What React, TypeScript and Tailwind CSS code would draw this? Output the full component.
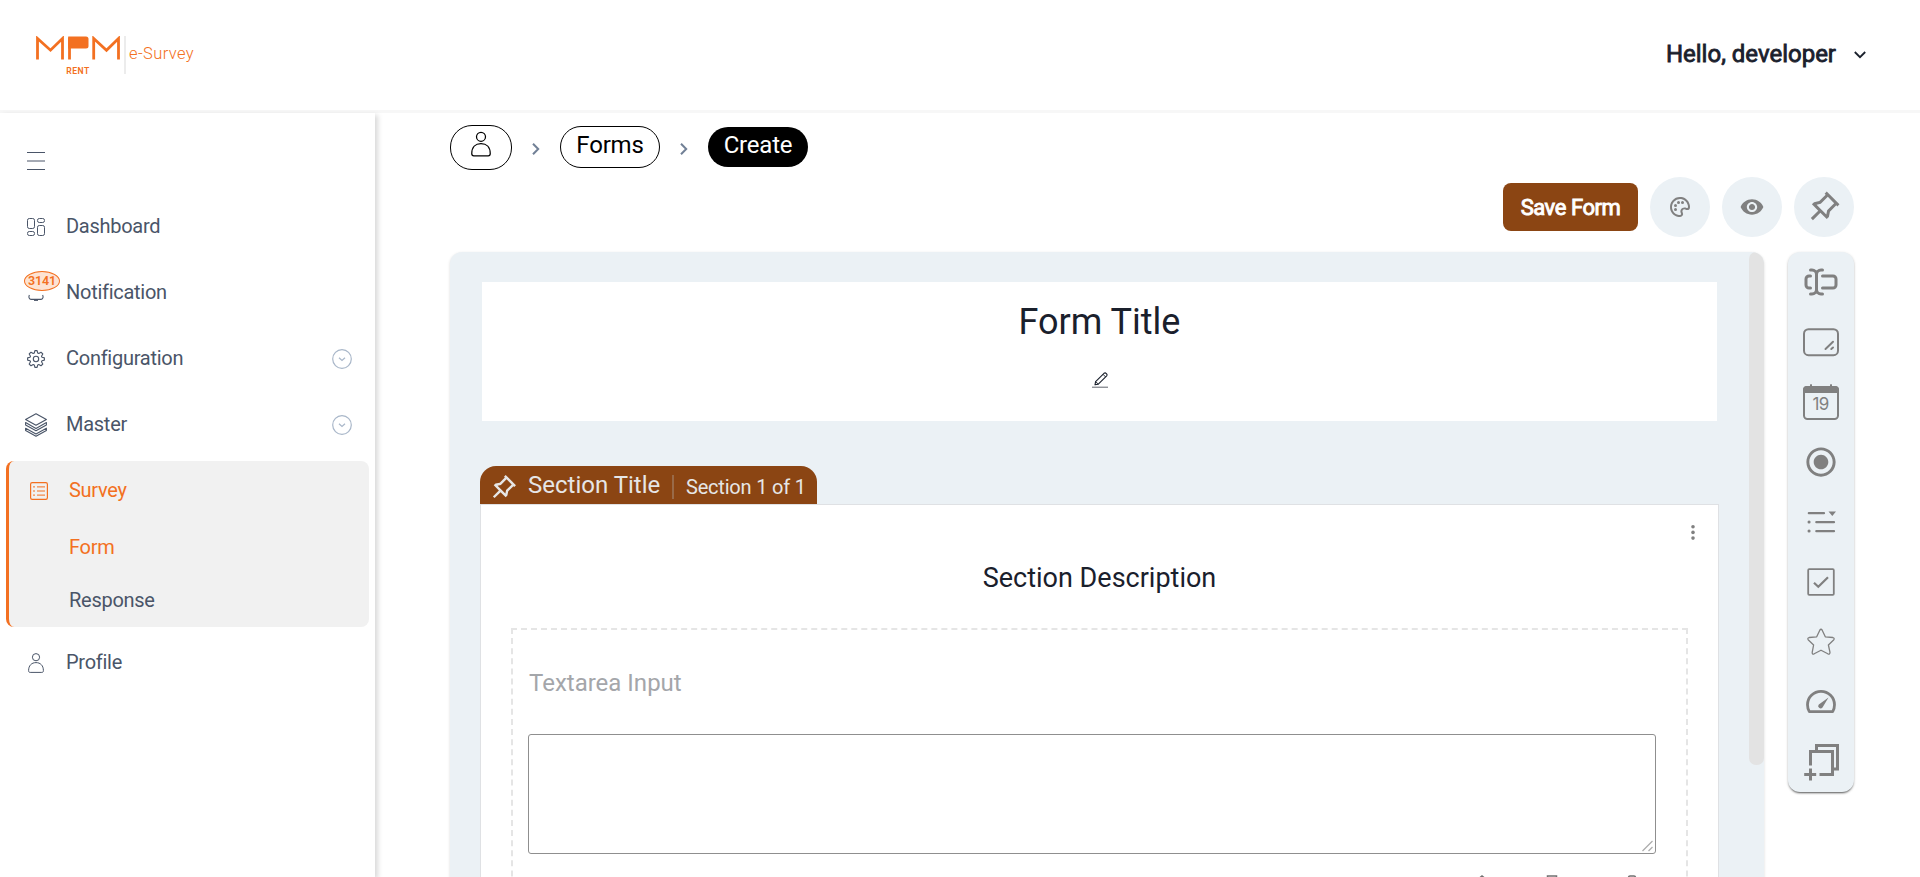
import React from "react";
import { RiPushpinLine } from "react-icons/ri";
import { IoMdEye, IoMdRadioButtonOn } from "react-icons/io";
import { LuTextCursorInput } from "react-icons/lu";
import { BiPalette } from "react-icons/bi";

type SvgProps = { className?: string };

function Logo() {
  return (
    <svg className="h-[40px] w-[86px]" viewBox="0 0 86 40" fill="none">
      <path d="M1.5 23.5V2.5L14.5 14.2L26.5 2.5V23.5" stroke="#f37021" strokeWidth="2.8" />
      <path d="M33.5 23.5V1.5" stroke="#f37021" strokeWidth="2.8" />
      <path d="M32.2 .5H50Q52.5 .5 52.5 3V10Q52.5 12.5 50 12.5H32.2Z" fill="#f37021" />
      <path d="M57.7 23.5V2.5L70.5 14.2L82.5 2.5V23.5" stroke="#f37021" strokeWidth="2.8" />
      <text x="30.3" y="38" textLength="23" fontFamily="Roboto, sans-serif" fontSize="8.6" fontWeight="600" fill="#f37021">RENT</text>
    </svg>
  );
}

function MenuIcon() {
  return (
    <svg className="size-[18px]" viewBox="0 0 18 18" stroke="#4a5568">
      <path d="M0 .5H18M0 17.5H18" />
      <path d="M0 9H18" strokeWidth="1" />
    </svg>
  );
}

function DashboardIcon() {
  return (
    <svg className="size-[18px]" viewBox="0 0 18 18" fill="none" stroke="#4a5568">
      <rect x=".5" y=".5" width="7" height="10" rx="1.8" />
      <rect x="10.5" y=".5" width="7" height="4" rx="1.8" />
      <rect x=".5" y="13.5" width="7" height="4" rx="1.8" />
      <rect x="10.5" y="7.5" width="7" height="10" rx="1.8" />
    </svg>
  );
}

function BellIcon() {
  return (
    <svg className="size-[18px]" viewBox="0 0 18 18" fill="none" stroke="#4a5568">
      <path d="M2.4 11C1.6 12.5 1.6 15 4 15.4H14C16.4 15 16.4 12.5 15.6 11" strokeWidth="1.1" />
      <path d="M7 16.2H11" strokeWidth="1.4" />
    </svg>
  );
}

function GearIcon() {
  return (
    <svg className="size-[18px]" viewBox="0 0 18 18" fill="none" stroke="#4a5568" strokeWidth="1.1" strokeLinejoin="round">
      <path d="M7.9 .6H10.1L10.7 3L11.8 3.5L14 2.2L15.8 4L14.5 6.2L15 7.3L17.4 7.9V10.1L15 10.7L14.5 11.8L15.8 14L14 15.8L11.8 14.5L10.7 15L10.1 17.4H7.9L7.3 15L6.2 14.5L4 15.8L2.2 14L3.5 11.8L3 10.7L.6 10.1V7.9L3 7.3L3.5 6.2L2.2 4L4 2.2L6.2 3.5L7.3 3Z" />
      <circle cx="9" cy="9" r="2.7" />
    </svg>
  );
}

function LayersIcon() {
  return (
    <svg className="h-[24px] w-[22px]" viewBox="0 0 22 24" fill="none" stroke="#4a5568" strokeWidth="1.1" strokeLinejoin="round">
      <path d="M11 .7L21.4 6.4L11 12.3L.6 6.4Z" />
      <path d="M.6 9.6L11 15.4L21.4 9.6V12L11 17.8L.6 12Z" />
      <path d="M.6 15.2L11 21L21.4 15.2V17.5L11 23.3L.6 17.5Z" />
    </svg>
  );
}

function SurveyIcon() {
  return (
    <svg className="size-[18px]" viewBox="0 0 18 18" fill="none" stroke="#f37021">
      <rect x=".6" y=".6" width="16.8" height="16.8" rx="1.6" strokeWidth="1.2" />
      <path d="M3 4.9H5M7 4.9H15M3 9H5M7 9H15M3 13.1H5M7 13.1H15" strokeWidth="1" />
    </svg>
  );
}

function PersonIcon({ className }: SvgProps) {
  return (
    <svg className={className} viewBox="0 0 16 20" fill="none" stroke="currentColor">
      <circle cx="8" cy="4.2" r="3.6" />
      <path d="M.6 17.6C.6 12.5 3.6 9.6 8 9.6S15.4 12.5 15.4 17.6C15.4 18.8 15 19.4 13.8 19.4H2.2C1 19.4 .6 18.8 .6 17.6Z" />
    </svg>
  );
}

function CircleDown() {
  return (
    <svg className="mt-px size-[20px]" viewBox="0 0 20 20" fill="none" stroke="#a9b7c9" strokeWidth="1.2">
      <circle cx="10" cy="10" r="9.3" />
      <path d="M7 8.7L10 11.5L13 8.7" />
    </svg>
  );
}

function Chevron() {
  return (
    <svg className="h-[12px] w-[8px]" viewBox="0 0 8 12" fill="none" stroke="#718096" strokeWidth="2">
      <path d="M1 .8L6.2 6L1 11.2" />
    </svg>
  );
}

function TextareaIcon() {
  return (
    <svg className="size-[36px]" viewBox="0 0 36 36" fill="none" stroke="#808080">
      <rect x="1" y="5.2" width="34" height="26" rx="4.5" strokeWidth="2" />
      <path d="M22.5 25L30 17.8M28.3 25L30 23.5" strokeWidth="2" strokeLinecap="round" />
    </svg>
  );
}

function CalendarIcon() {
  return (
    <svg className="size-[36px]" viewBox="0 0 36 36" fill="none">
      <rect x="1" y="3" width="34" height="32" rx="3.5" stroke="#808080" strokeWidth="2" />
      <path d="M0 9V5.5Q0 2 3.5 2H7V.8Q8 -.6 9 .8V2H27V.8Q28 -.6 29 .8V2H32.5Q36 2 36 5.5V9Z" fill="#808080" />
      <text x="17.6" y="26" textAnchor="middle" fontFamily="Inter, sans-serif" fontSize="17" letterSpacing="-.6" fill="#808080">19</text>
    </svg>
  );
}

function DropdownIcon() {
  return (
    <svg className="size-[36px]" viewBox="0 0 36 36" fill="none" stroke="#808080" strokeWidth="2.2" strokeLinecap="round">
      <path d="M5.8 9.2H21M13.3 18.2H31M13.3 27.2H31" />
      <path d="M6 18H6.1M6 27H6.1" strokeWidth="3" />
      <path d="M25.5 7.5H33L29.3 12Z" fill="#808080" stroke="none" />
    </svg>
  );
}

function CheckboxIcon() {
  return (
    <svg className="size-[36px]" viewBox="0 0 36 36" fill="none" stroke="#808080">
      <rect x="5.2" y="5.2" width="25.6" height="25.6" rx="1" strokeWidth="1.8" />
      <path d="M11 18.7L15.3 22.8L25 13.2" strokeWidth="2.2" />
    </svg>
  );
}

function StarIcon() {
  return (
    <svg className="size-[36px]" viewBox="0 0 36 36" fill="none" stroke="#808080" strokeWidth="1.3" strokeLinejoin="round">
      <path d="M16.8 6.2Q18 4.3 19.2 6.2L22.3 12.8L29.8 13.5Q32 14.2 30.6 16L25.4 21L27 28.3Q27 30.7 24.8 29.8L18 26.2L11.2 29.8Q9 30.7 9.2 28.3L10.6 21L5.4 16Q4 14.2 6.2 13.5L13.7 12.8Z" />
    </svg>
  );
}

function GaugeIcon() {
  return (
    <svg className="size-[36px]" viewBox="0 0 36 36" fill="none">
      <path d="M6.3 27.6Q4.5 24.6 4.5 20.8A13.5 13.5 0 0 1 31.5 20.8Q31.5 24.6 29.7 27.6Z" stroke="#808080" strokeWidth="2.8" strokeLinejoin="round" />
      <path d="M25.5 13.4L15.8 20.4A2.3 2.3 0 1 0 19.5 23.6Z" fill="#808080" />
    </svg>
  );
}

function AddSectionIcon() {
  return (
    <svg className="size-[36px] overflow-visible" viewBox="0 0 36 36" fill="none" stroke="#808080" strokeWidth="3">
      <path d="M7.5 21.5V7.5H29.5V30.5H16.5" />
      <path d="M13.5 6.5V1.5H34.5V25H31" />
      <path d="M7.5 24.5V36.5M1.2 30.5H13.2" />
    </svg>
  );
}

function EditIcon() {
  return (
    <svg className="size-[16px]" viewBox="0 0 16 16" fill="none" stroke="#1a202c">
      <path d="M3 12.8L3.6 9.6L12 1.3C13.6 .2 15.8 2.2 14.7 3.8L6.3 12.1Z" strokeWidth="1.1" strokeLinejoin="round" />
      <path d="M11 2.3L13.7 5M3.6 9.6L6.3 12.1" strokeWidth=".9" />
      <path d="M0 15.2H16" strokeWidth="1" strokeOpacity=".7" />
    </svg>
  );
}

type NavProps = { icon: React.ReactNode; label: string; expandable?: boolean };

function NavItem({ icon, label, expandable }: NavProps) {
  return (
    <div className="flex h-[66px] items-center pl-[20px] pr-[23px]">
      <div className="flex w-[32px] justify-center pt-[2px]">{icon}</div>
      <span className="ml-[14px] flex-1 text-[20px] leading-[30px] tracking-[-0.27px] text-[#4a5568]">{label}</span>
      {expandable && <CircleDown />}
    </div>
  );
}

function Sidebar() {
  return (
    <aside className="relative z-10 flex w-[375px] shrink-0 flex-col bg-white shadow-[3px_2px_5px_rgba(0,0,0,0.15)]">
      <div className="pl-[27px] pt-[39px]">
        <MenuIcon />
      </div>
      <nav className="mt-[23px] flex flex-col">
        <NavItem icon={<DashboardIcon />} label="Dashboard" />
        <NavItem
          icon={
            <div className="relative">
              <BellIcon />
              <span className="absolute left-[-3px] top-[-13px] z-10 flex h-[20px] w-[36px] items-center justify-center rounded-[50%] border border-[#f37021] bg-[#fde3d3] text-[12.5px] font-semibold tracking-[-0.1px] text-[#f37021]">
                3141
              </span>
            </div>
          }
          label="Notification"
        />
        <NavItem icon={<GearIcon />} label="Configuration" expandable />
        <NavItem icon={<LayersIcon />} label="Master" expandable />
      </nav>
      <div className="ml-[6px] mt-[4px] flex h-[166px] w-[363px] flex-col rounded-[8px] border-l-[3px] border-[#f37021] bg-[#f1f1f1] text-[20px] leading-[30px] tracking-[-0.27px]">
        <div className="mt-[14px] flex h-[30px] items-center pl-[21px] text-[#f37021]">
          <span className="pt-[2px]"><SurveyIcon /></span>
          <span className="ml-[21px]">Survey</span>
        </div>
        <span className="ml-[60px] mt-[27px] text-[#f37021]">Form</span>
        <span className="ml-[60px] mt-[23px] text-[#4a5568]">Response</span>
      </div>
      <div className="mt-[2px]">
        <NavItem icon={<PersonIcon className="h-[20px] w-[16px] text-[#4a5568]" />} label="Profile" />
      </div>
    </aside>
  );
}

function Breadcrumb() {
  return (
    <div className="flex h-[45px] items-center text-[24px] leading-[30px] text-black">
      <div className="flex h-[45px] w-[62px] justify-center rounded-[22px] border border-black pt-[5px]">
        <PersonIcon className="h-[26px] w-[20px] text-black" />
      </div>
      <div className="flex w-[48px] justify-center pt-[3px]"><Chevron /></div>
      <div className="mb-px flex h-[42px] w-[100px] justify-center rounded-[21px] border border-black pt-[3px] tracking-[-0.2px]">Forms</div>
      <div className="flex w-[48px] justify-center pt-[3px]"><Chevron /></div>
      <div className="mb-px flex h-[40px] w-[100px] justify-center rounded-[20px] bg-black pt-[3px] tracking-[-0.2px] text-white">Create</div>
    </div>
  );
}

function Actions() {
  return (
    <div className="mt-[7px] flex h-[60px] items-center justify-end gap-[12px] text-[#808080]">
      <button className="flex h-[48px] w-[135px] items-center justify-center rounded-[8px] bg-[#8b4513] text-[22px] tracking-[-0.45px] text-white [-webkit-text-stroke:0.9px_currentColor]">
        Save Form
      </button>
      <div className="flex size-[60px] items-center justify-center rounded-full bg-[#ebf1f5]"><BiPalette size={24} /></div>
      <div className="flex size-[60px] items-center justify-center rounded-full bg-[#ebf1f5]"><IoMdEye size={26} /></div>
      <div className="flex size-[60px] items-center justify-center rounded-full bg-[#ebf1f5]"><RiPushpinLine size={36} /></div>
    </div>
  );
}

function Toolbox() {
  return (
    <div className="flex h-[540px] w-[66px] shrink-0 flex-col items-center rounded-[12px] bg-[#ebf1f5] text-[#808080] shadow-[0_2px_2px_-1px_rgba(0,0,0,0.55),0_1px_3px_rgba(0,0,0,0.2)]">
      <div className="flex h-[60px] items-center"><LuTextCursorInput size={36} /></div>
      <div className="flex h-[60px] items-center"><TextareaIcon /></div>
      <div className="flex h-[60px] items-center"><CalendarIcon /></div>
      <div className="flex h-[60px] items-center"><IoMdRadioButtonOn size={36} /></div>
      <div className="flex h-[60px] items-center"><DropdownIcon /></div>
      <div className="flex h-[60px] items-center"><CheckboxIcon /></div>
      <div className="flex h-[60px] items-center"><StarIcon /></div>
      <div className="flex h-[60px] items-center"><GaugeIcon /></div>
      <div className="flex h-[60px] items-center"><AddSectionIcon /></div>
    </div>
  );
}

function SectionCard() {
  return (
    <section className="mt-[45px] flex w-[1239px] shrink-0 flex-col">
      <div className="flex h-[38px] w-[337px] shrink-0 items-center rounded-t-[16px] bg-[#8b4513] pl-[9px] text-[#e6e6e6]">
        <RiPushpinLine size={29} className="mt-[4px]" />
        <span className="ml-[10px] w-[144px] text-[24px] leading-[30px]">Section Title</span>
        <span className="mt-[4px] h-[24px] w-[2px] bg-[#996a48]" />
        <span className="ml-[12px] mt-[4px] text-[20px] leading-[30px] tracking-[-0.2px]">Section 1 of 1</span>
      </div>
      <div className="flex h-[420px] flex-col border border-[#dfe1e4] bg-white">
        <div className="flex h-[50px] shrink-0 justify-end pr-[23px] pt-[20px]">
          <svg className="h-[15px] w-[4px]" viewBox="0 0 4 15" fill="#808080">
            <circle cx="2" cy="1.8" r="1.8" />
            <circle cx="2" cy="7.4" r="1.8" />
            <circle cx="2" cy="13.1" r="1.8" />
          </svg>
        </div>
        <div className="mt-[3px] text-center text-[27px] leading-[40px] text-[#1a202c]">Section Description</div>
        <div className="ml-[30px] mt-[30px] flex h-[400px] w-[1177px] shrink-0 flex-col border-2 border-dashed border-[#e5e5e5]">
          <div className="ml-[16px] mt-[35px] text-[24px] leading-[36px] text-[#a4a6aa]">Textarea Input</div>
          <div className="ml-[15px] mt-[33px] flex h-[120px] w-[1128px] items-end justify-end rounded-[3px] border border-[#8f8f8f] p-[1px]">
            <svg className="h-[12px] w-[12px]" viewBox="0 0 12 12" stroke="#aeaeae" strokeWidth="1.3">
              <path d="M.5 11L10.5 1M6.5 11L10.5 7" />
            </svg>
          </div>
          <div className="mt-[21px] flex justify-end pr-[48px]">
            <svg className="mr-[58px] h-[12px] w-[12px]" viewBox="0 0 12 12" fill="none" stroke="#707070" strokeWidth="1.5"><path d="M1 5L6 1L11 5" /></svg>
            <svg className="mr-[68px] h-[12px] w-[12px]" viewBox="0 0 12 12" fill="none" stroke="#707070" strokeWidth="1.5"><path d="M1.5 1H10.5V11H1.5Z" /></svg>
            <svg className="h-[12px] w-[12px]" viewBox="0 0 12 12" fill="none" stroke="#707070" strokeWidth="1.5"><path d="M2.5 5V2.5Q2.5 1 4 1H8Q9.5 1 9.5 2.5V5" /></svg>
          </div>
        </div>
      </div>
    </section>
  );
}

function FormCanvas() {
  return (
    <div className="flex h-[640px] w-[1314px] shrink-0 overflow-hidden rounded-t-[12px] bg-[#ebf1f5] shadow-[0_1px_3px_rgba(0,0,0,0.15)]">
      <div className="flex flex-1 flex-col pl-[30px] pt-[30px]">
        <div className="ml-[2px] flex h-[139px] w-[1235px] shrink-0 flex-col items-center bg-white">
          <h1 className="mt-[13px] text-[36px] leading-[54px] text-[#1a202c]">Form Title</h1>
          <div className="mt-[23px]"><EditIcon /></div>
        </div>
        <SectionCard />
      </div>
      <div className="h-[513px] w-[15px] rounded-[7px] bg-[#e3e3e3]" />
    </div>
  );
}

export default function App() {
  return (
    <div className="flex h-[877px] w-[1920px] flex-col overflow-hidden bg-white font-[Roboto,sans-serif]">
      <header className="flex h-[113px] shrink-0 items-start justify-between border-b-[3px] border-[#f7f7f7] pl-[36px] pr-[54px]">
        <div className="flex pt-[36px]">
          <Logo />
          <div className="ml-[2px] mt-0 h-[38px] w-[2px] bg-[#ececec]" />
          <span className="ml-[3px] mt-[6px] text-[16.5px] font-light leading-[24px] tracking-[0.4px] text-[#f37021]">e-Survey</span>
        </div>
        <div className="flex items-center pt-[36px] text-[#1a202c]">
          <span className="text-[24px] leading-[36px] [-webkit-text-stroke:0.8px_currentColor]">Hello, developer</span>
          <svg className="ml-[18px] mt-[2px] h-[8px] w-[12px]" viewBox="0 0 12 8" fill="none" stroke="#1a202c" strokeWidth="1.8">
            <path d="M.8 1L6 6.2L11.2 1" />
          </svg>
        </div>
      </header>
      <div className="flex min-h-0 flex-1">
        <Sidebar />
        <main className="flex min-w-0 flex-1 flex-col pl-[75px] pr-[66px] pt-[12px]">
          <Breadcrumb />
          <Actions />
          <div className="mt-[15px] flex gap-[24px]">
            <FormCanvas />
            <Toolbox />
          </div>
        </main>
      </div>
    </div>
  );
}
